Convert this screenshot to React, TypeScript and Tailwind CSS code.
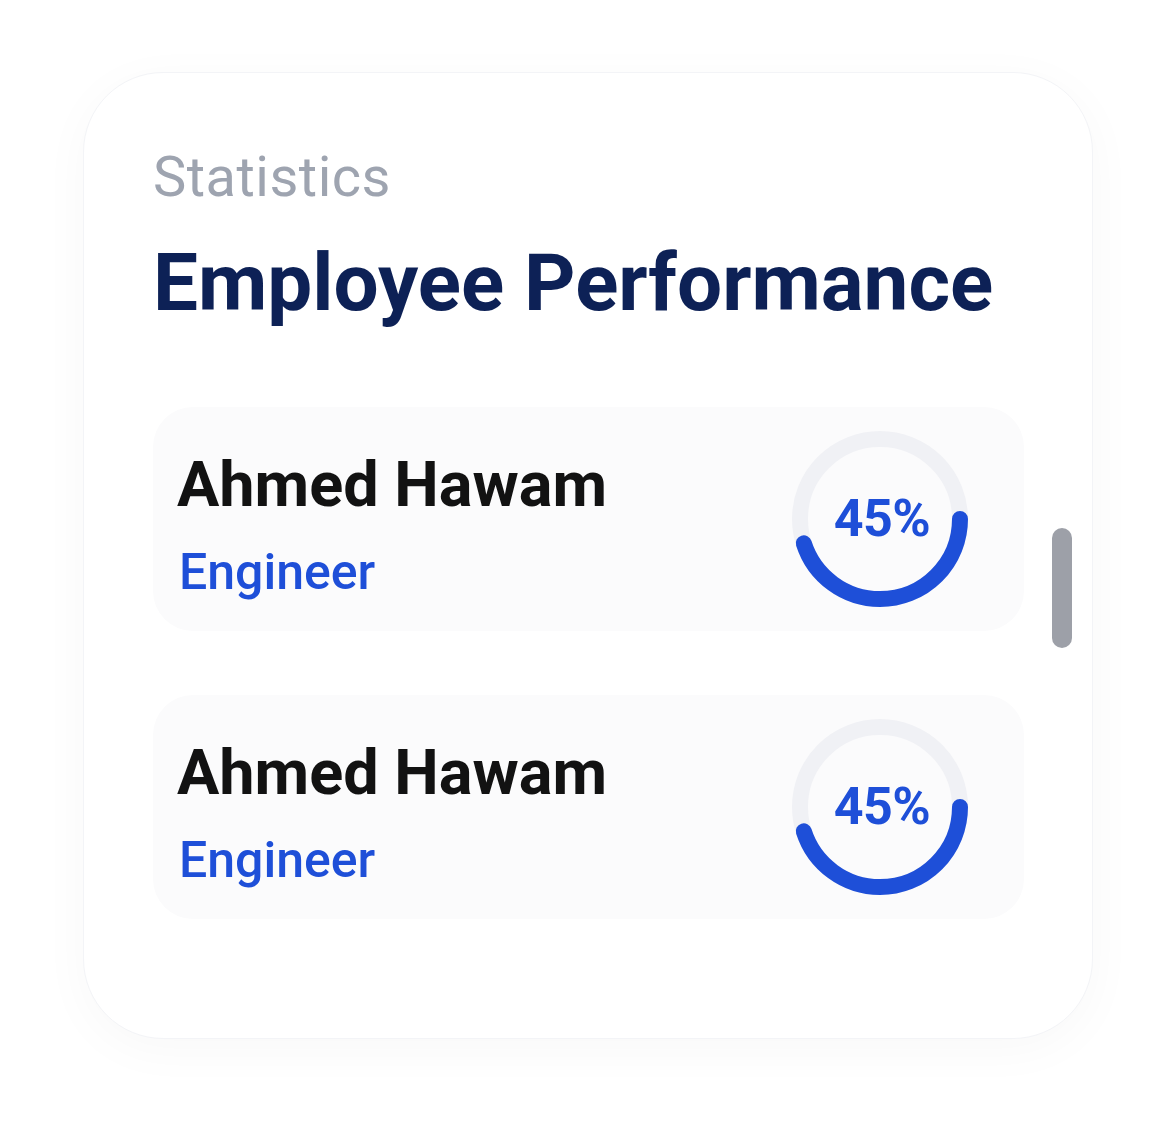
const employees = [
  { name: "Ahmed Hawam", role: "Engineer", score: 45 },
  { name: "Ahmed Hawam", role: "Engineer", score: 45 },
];

const Ring = ({ value }: { value: number }) => {
  const r = 80;
  const c = 2 * Math.PI * r;
  return (
    <div className="relative w-[176px] h-[176px] shrink-0">
      <svg width="176" height="176" viewBox="0 0 176 176">
        <circle cx="88" cy="88" r={r} fill="none" stroke="#f0f1f5" strokeWidth="16" />
        <circle
          cx="88"
          cy="88"
          r={r}
          fill="none"
          stroke="#1e4fd8"
          strokeWidth="16"
          strokeLinecap="round"
          strokeDasharray={`${(c * value) / 100} ${c}`}
        />
      </svg>
      <span className="absolute inset-0 flex items-center justify-center pl-1 text-[52px] font-bold text-[#1e4fd8] leading-none tracking-[-0.5px]">
        {value}%
      </span>
    </div>
  );
};

const App = () => {
  return (
    <div
      className="min-h-[1136px] bg-white pt-[72px] pl-[83px]"
      style={{ fontFamily: "Roboto, 'Noto Sans', sans-serif" }}
    >
      <div className="relative w-[1010px] h-[967px] rounded-[80px] bg-white border border-[#f3f4f7] shadow-[0_10px_50px_rgba(15,23,42,0.03)] pl-[69px] pt-[68px]">
        {/* Heading */}
        <p className="text-[56px] leading-[72px] text-[#9ea4b0] tracking-[0.5px]">Statistics</p>
        <h1 className="mt-[22px] text-[80px] leading-[96px] font-bold text-[#0d2156]">
          Employee Performance
        </h1>

        {/* List */}
        <div className="mt-[76px] w-[871px] flex flex-col gap-[64px]">
          {employees.map((e, i) => (
            <div
              key={i}
              className="h-[224px] rounded-[40px] bg-[#fbfbfc] pl-6 pr-[56px] flex items-center justify-between"
            >
              <div className="self-start pt-[42px] flex flex-col">
                <span className="text-[63px] leading-[72px] font-bold text-[#121212]">{e.name}</span>
                <span className="mt-[21px] text-[50px] leading-[60px] font-medium text-[#1e4fd8] pl-[2px]">
                  {e.role}
                </span>
              </div>
              <Ring value={e.score} />
            </div>
          ))}
        </div>

        {/* Scrollbar thumb */}
        <div className="absolute left-[968px] top-[455px] w-[20px] h-[120px] rounded-full bg-[#9da0a8]" />
      </div>
    </div>
  );
};

export default App;
